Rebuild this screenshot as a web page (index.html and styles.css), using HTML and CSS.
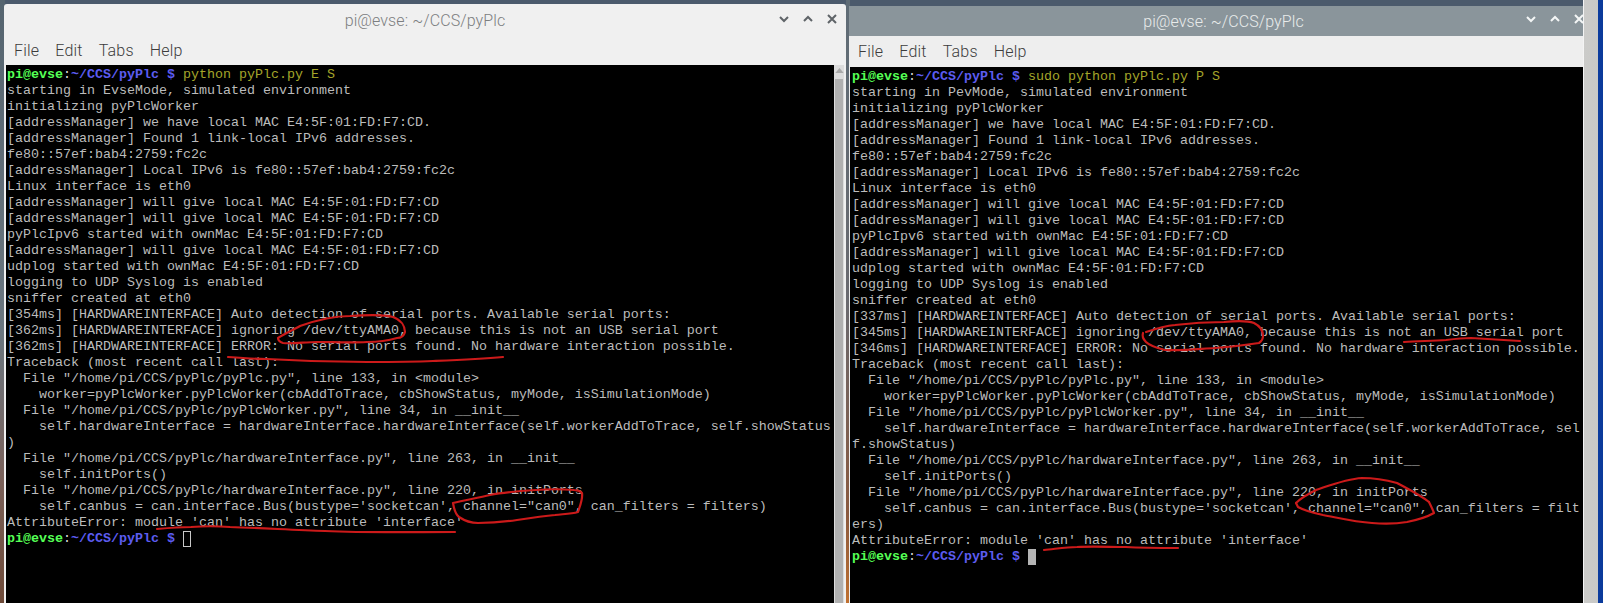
FILE: index.html
```html
<!DOCTYPE html>
<html lang="en">
<head>
<meta charset="utf-8">
<title>pi@evse terminals</title>
<link rel="stylesheet" href="styles.css">
</head>
<body>
<div class="desktop">
  <section class="window window-left">
    <header class="titlebar">
      <span class="title">pi@evse: ~/CCS/pyPlc</span>
      <div class="controls">
        <svg class="ctl" viewBox="0 0 12 12"><path d="M2 4l4 4 4-4"/></svg>
        <svg class="ctl" viewBox="0 0 12 12"><path d="M2 8l4-4 4 4"/></svg>
        <svg class="ctl" viewBox="0 0 12 12"><path d="M2 2l8 8M10 2l-8 8"/></svg>
      </div>
    </header>
    <nav class="menu"><span>File</span><span>Edit</span><span>Tabs</span><span>Help</span></nav>
    <div class="term-row">
<pre class="term"><span class="u">pi@evse</span><span class="c">:</span><span class="p">~/CCS/pyPlc $</span> <span class="cmd">python pyPlc.py E S</span>
starting in EvseMode, simulated environment
initializing pyPlcWorker
[addressManager] we have local MAC E4:5F:01:FD:F7:CD.
[addressManager] Found 1 link-local IPv6 addresses.
fe80::57ef:bab4:2759:fc2c
[addressManager] Local IPv6 is fe80::57ef:bab4:2759:fc2c
Linux interface is eth0
[addressManager] will give local MAC E4:5F:01:FD:F7:CD
[addressManager] will give local MAC E4:5F:01:FD:F7:CD
pyPlcIpv6 started with ownMac E4:5F:01:FD:F7:CD
[addressManager] will give local MAC E4:5F:01:FD:F7:CD
udplog started with ownMac E4:5F:01:FD:F7:CD
logging to UDP Syslog is enabled
sniffer created at eth0
[354ms] [HARDWAREINTERFACE] Auto detection of serial ports. Available serial ports:
[362ms] [HARDWAREINTERFACE] ignoring /dev/ttyAMA0, because this is not an USB serial port
[362ms] [HARDWAREINTERFACE] ERROR: No serial ports found. No hardware interaction possible.
Traceback (most recent call last):
  File "/home/pi/CCS/pyPlc/pyPlc.py", line 133, in &lt;module&gt;
    worker=pyPlcWorker.pyPlcWorker(cbAddToTrace, cbShowStatus, myMode, isSimulationMode)
  File "/home/pi/CCS/pyPlc/pyPlcWorker.py", line 34, in __init__
    self.hardwareInterface = hardwareInterface.hardwareInterface(self.workerAddToTrace, self.showStatus
)
  File "/home/pi/CCS/pyPlc/hardwareInterface.py", line 263, in __init__
    self.initPorts()
  File "/home/pi/CCS/pyPlc/hardwareInterface.py", line 220, in initPorts
    self.canbus = can.interface.Bus(bustype='socketcan', channel="can0", can_filters = filters)
AttributeError: module 'can' has no attribute 'interface'
<span class="u">pi@evse</span><span class="c">:</span><span class="p">~/CCS/pyPlc $</span> <span class="cursor-hollow"> </span></pre>
      <div class="scrollbar"><svg class="arrow" viewBox="0 0 10 6"><path d="M5 0l5 6H0z"/></svg><div class="thumb"></div></div>
    </div>
  </section>

  <section class="window window-right">
    <header class="titlebar titlebar-inactive">
      <span class="title">pi@evse: ~/CCS/pyPlc</span>
      <div class="controls">
        <svg class="ctl" viewBox="0 0 12 12"><path d="M2 4l4 4 4-4"/></svg>
        <svg class="ctl" viewBox="0 0 12 12"><path d="M2 8l4-4 4 4"/></svg>
        <svg class="ctl" viewBox="0 0 12 12"><path d="M2 2l8 8M10 2l-8 8"/></svg>
      </div>
    </header>
    <nav class="menu"><span>File</span><span>Edit</span><span>Tabs</span><span>Help</span></nav>
    <div class="term-row">
<pre class="term"><span class="u">pi@evse</span><span class="c">:</span><span class="p">~/CCS/pyPlc $</span> <span class="cmd">sudo python pyPlc.py P S</span>
starting in PevMode, simulated environment
initializing pyPlcWorker
[addressManager] we have local MAC E4:5F:01:FD:F7:CD.
[addressManager] Found 1 link-local IPv6 addresses.
fe80::57ef:bab4:2759:fc2c
[addressManager] Local IPv6 is fe80::57ef:bab4:2759:fc2c
Linux interface is eth0
[addressManager] will give local MAC E4:5F:01:FD:F7:CD
[addressManager] will give local MAC E4:5F:01:FD:F7:CD
pyPlcIpv6 started with ownMac E4:5F:01:FD:F7:CD
[addressManager] will give local MAC E4:5F:01:FD:F7:CD
udplog started with ownMac E4:5F:01:FD:F7:CD
logging to UDP Syslog is enabled
sniffer created at eth0
[337ms] [HARDWAREINTERFACE] Auto detection of serial ports. Available serial ports:
[345ms] [HARDWAREINTERFACE] ignoring /dev/ttyAMA0, because this is not an USB serial port
[346ms] [HARDWAREINTERFACE] ERROR: No serial ports found. No hardware interaction possible.
Traceback (most recent call last):
  File "/home/pi/CCS/pyPlc/pyPlc.py", line 133, in &lt;module&gt;
    worker=pyPlcWorker.pyPlcWorker(cbAddToTrace, cbShowStatus, myMode, isSimulationMode)
  File "/home/pi/CCS/pyPlc/pyPlcWorker.py", line 34, in __init__
    self.hardwareInterface = hardwareInterface.hardwareInterface(self.workerAddToTrace, sel
f.showStatus)
  File "/home/pi/CCS/pyPlc/hardwareInterface.py", line 263, in __init__
    self.initPorts()
  File "/home/pi/CCS/pyPlc/hardwareInterface.py", line 220, in initPorts
    self.canbus = can.interface.Bus(bustype='socketcan', channel="can0", can_filters = filt
ers)
AttributeError: module 'can' has no attribute 'interface'
<span class="u">pi@evse</span><span class="c">:</span><span class="p">~/CCS/pyPlc $</span> <span class="cursor-solid"> </span></pre>
    </div>
  </section>

  <div class="side-strip"></div>

  <svg class="ink" viewBox="0 0 1603 603" aria-hidden="true">
    <path d="M278 338C284 334 293 330 300 326C317 320 335 316 350 316C365 315 383 314 393 317C401 320 405 326 405 332C404 336 402 338 397 338C387 341 377 342 367 342C350 343 333 342 317 342C305 342 293 344 283 343C280 342 278 340 278 338"/>
    <path d="M228 357C241 358 254 359 267 359C300 361 333 362 367 362C389 362 411 362 433 361C456 360 480 359 503 357"/>
    <path d="M453 503C454 509 455 514 459 517C465 521 471 523 478 523C491 523 504 522 517 520C530 518 543 516 555 515C563 514 571 514 578 512C580 506 583 499 582 493C580 491 577 490 574 490C561 489 549 489 536 490C520 491 505 492 490 495C478 498 465 500 453 503"/>
    <path d="M157 529C168 528 180 527 191 527C204 526 217 526 230 527C262 528 293 530 325 531C368 533 412 532 455 532"/>
    <path d="M1146 332C1155 329 1165 326 1175 325C1191 323 1208 322 1224 322C1234 321 1246 320 1254 323C1260 326 1263 330 1263 336C1263 338 1262 341 1259 343C1245 345 1230 347 1215 348C1198 349 1182 351 1165 350C1157 348 1150 346 1146 342C1143 339 1142 336 1143 333"/>
    <path d="M1404 342C1418 341 1432 341 1446 340C1454 339 1463 338 1471 338C1487 339 1504 340 1520 341"/>
    <path d="M1296 503C1301 498 1308 494 1316 490C1331 485 1346 479 1362 478C1374 478 1386 480 1397 483C1408 489 1420 495 1429 502"/>
    <path d="M1429 502C1431 506 1433 510 1434 513C1427 517 1417 520 1407 522C1395 524 1384 524 1372 523C1355 522 1339 518 1323 515C1314 513 1305 511 1298 507L1296 503"/>
    <path d="M1044 550C1055 549 1066 547 1077 547C1093 546 1110 547 1126 547C1143 548 1161 548 1178 548"/>
  </svg>
</div>
</body>
</html>
```

FILE: styles.css
```css
html, body {
  margin: 0;
  padding: 0;
  background: #4b5b6b;
  overflow: hidden;
}

.desktop {
  position: relative;
  width: 1603px;
  height: 603px;
  overflow: hidden;
  background:
    linear-gradient(180deg, #55646f 0, #6a7680 55%, #7a6058 80%, #6e4a38 100%) left top / 5px 100% no-repeat,
    linear-gradient(180deg, #5f6c76 0, #6a6a70 50%, #8a5a40 85%, #c07030 100%) 846px 0 / 4px 100% no-repeat,
    #4b5a6c;
}

.window {
  position: absolute;
  display: flex;
  flex-direction: column;
  box-sizing: border-box;
  overflow: hidden;
}

.window-left {
  left: 4px;
  top: 4px;
  width: 842px;
  height: 599px;
  background: #f0f0f0;
  border-radius: 3px 3px 0 0;
  padding: 0 2px 0 2px;
}

.window-right {
  left: 849px;
  top: 6px;
  width: 749px;
  height: 597px;
  background: #eeeeee;
  padding: 0 1px;
}

.titlebar {
  flex: 0 0 31px;
  box-sizing: border-box;
  padding-top: 2px;
  position: relative;
  display: flex;
  align-items: center;
  justify-content: center;
  font: 300 16px "Roboto", sans-serif;
  color: #7c7e80;
  margin: 0 -2px;
}

.titlebar-inactive {
  flex-basis: 30px;
  padding-top: 0;
  background: #8a959b;
  color: #e9eceb;
  margin: 0 -1px;
}

.title {
  letter-spacing: 0.1px;
}

.controls {
  position: absolute;
  right: 8px;
  top: 9px;
  display: flex;
  gap: 12px;
}

.titlebar-inactive .controls {
  right: 13px;
  top: 7px;
}

.ctl {
  width: 12px;
  height: 12px;
  fill: none;
  stroke: #5f6468;
  stroke-width: 2;
}

.titlebar-inactive .ctl {
  stroke: #f4f6f6;
}

.menu {
  flex: 0 0 30px;
  display: flex;
  align-items: center;
  gap: 16px;
  padding-left: 8px;
  font: 300 16px "Roboto", sans-serif;
  letter-spacing: 0.2px;
  color: #3c3c3c;
}

.window-right .menu {
  flex-basis: 31px;
}

.term-row {
  flex: 1;
  display: flex;
  min-height: 0;
}

.term {
  flex: 1;
  margin: 0;
  padding: 2px 0 0 1px;
  background: #000;
  color: #bcbcbc;
  font: 13.33px/16px "Liberation Mono", monospace;
  overflow: hidden;
  white-space: pre;
}

.window-right .term {
  padding-left: 2px;
}

.u { color: #55ff55; font-weight: 700; }
.c { color: #d8d8d8; }
.p { color: #5c5cf0; font-weight: 700; }
.cmd { color: #a5a52a; }

.cursor-hollow {
  display: inline-block;
  width: 8px;
  height: 16px;
  box-sizing: border-box;
  border: 1px solid #c8c8c8;
  vertical-align: top;
}

.cursor-solid {
  display: inline-block;
  width: 8px;
  height: 16px;
  background: #b4b4b4;
  vertical-align: top;
}

.scrollbar {
  flex: 0 0 10px;
  display: flex;
  flex-direction: column;
  align-items: center;
  background: #dcdcdc;
}

.arrow {
  width: 9px;
  height: 5px;
  margin: 3px 0 6px;
  fill: #a8a8a8;
}

.thumb {
  flex: 1;
  width: 8px;
  background: #b0b0b0;
}

.side-strip {
  position: absolute;
  left: 1583px;
  top: 0;
  bottom: 0;
  width: 20px;
  background: linear-gradient(90deg, #f4f4f4 0, #f4f4f4 1px, #cbcbc9 1px, #c9c9c7 15px, #0c3c9e 15px, #0a3a9a 100%);
}

.ink {
  position: absolute;
  left: 0;
  top: 0;
  width: 1603px;
  height: 603px;
  fill: none;
  stroke: #cc1a1a;
  stroke-width: 2.2;
  stroke-linecap: round;
  stroke-linejoin: round;
  pointer-events: none;
}
```
